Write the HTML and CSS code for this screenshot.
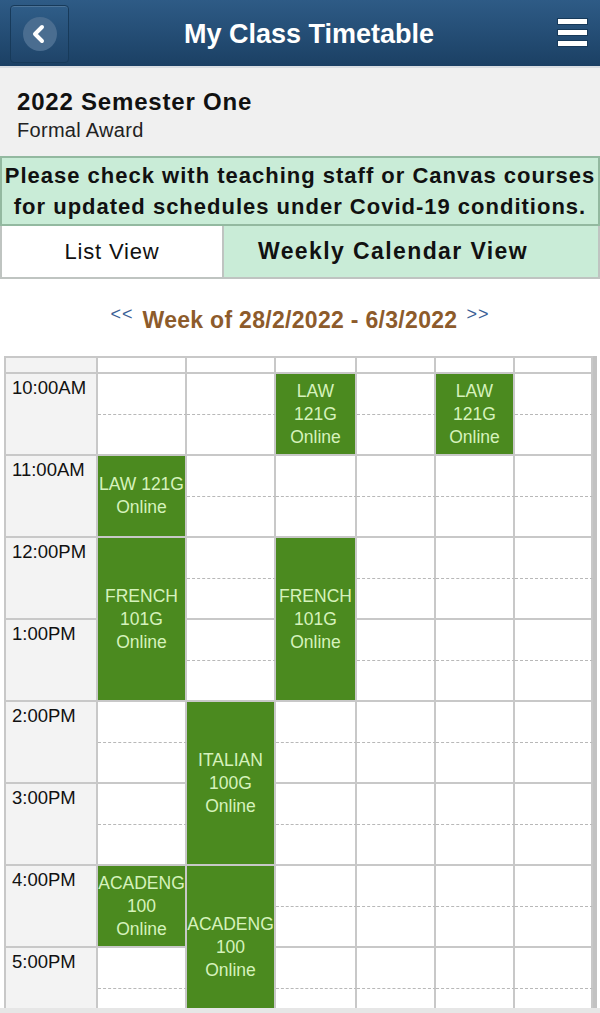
FILE: index.html
```html
<!DOCTYPE html>
<html lang="en">
<head>
<meta charset="UTF-8" />
<meta name="viewport" content="width=device-width, initial-scale=1" />
<title>My Class Timetable</title>
<link rel="stylesheet" href="styles.css">
</head>
<body>

<div class="topbar">
  <div class="back-btn">
    <span class="back-circle">
      <svg width="20" height="20" viewBox="0 0 20 20"><path d="M13 3 L6 10 L13 17" fill="none" stroke="#fff" stroke-width="4" stroke-linecap="round" stroke-linejoin="round"/></svg>
    </span>
  </div>
  <h1 class="title">My Class Timetable</h1>
  <div class="menu-btn">
    <span></span><span></span><span></span>
  </div>
</div>

<div class="term">
  <div class="term-name">2022 Semester One</div>
  <div class="term-sub">Formal Award</div>
</div>

<div class="notice">Please check with teaching staff or Canvas courses<br>for updated schedules under Covid-19 conditions.</div>

<div class="tabs">
  <div class="tab">List View</div>
  <div class="tab active">Weekly Calendar View</div>
</div>

<div class="week-nav">
  <span class="arrow">&lt;&lt;</span>
  <span class="week-label">Week of 28/2/2022 - 6/3/2022</span>
  <span class="arrow">&gt;&gt;</span>
</div>

<div class="calendar-wrap">
  <div id="calendar" class="calendar"></div>
</div>

<script>
  const hours = ['10:00AM', '11:00AM', '12:00PM', '1:00PM', '2:00PM', '3:00PM', '4:00PM', '5:00PM'];
  const days = 6;

  // day = column (1..6), start = half hour slot from 10am, len = slots
  const events = [
    { day: 3, start: 0, len: 2, text: 'LAW<br>121G<br>Online' },
    { day: 5, start: 0, len: 2, text: 'LAW<br>121G<br>Online' },
    { day: 1, start: 2, len: 2, text: 'LAW 121G<br>Online' },
    { day: 1, start: 4, len: 4, text: 'FRENCH<br>101G<br>Online' },
    { day: 3, start: 4, len: 4, text: 'FRENCH<br>101G<br>Online' },
    { day: 2, start: 8, len: 4, text: 'ITALIAN<br>100G<br>Online' },
    { day: 1, start: 12, len: 2, text: 'ACADENG<br>100<br>Online' },
    { day: 2, start: 12, len: 4, text: 'ACADENG<br>100<br>Online' }
  ];

  const cal = document.getElementById('calendar');

  function addCell(cls, row, col, span, html) {
    const el = document.createElement('div');
    el.className = cls;
    el.style.gridRow = row + (span ? ' / span ' + span : '');
    el.style.gridColumn = col;
    if (html) el.innerHTML = html;
    cal.appendChild(el);
  }

  // header row
  addCell('cell head time-col', 1, 1);
  for (let d = 1; d <= days; d++) addCell('cell head', 1, d + 1);

  hours.forEach((h, i) => {
    const row = 2 + i * 2;
    addCell('cell time-col time', row, 1, 2, h);
    for (let d = 1; d <= days; d++) {
      addCell('cell half', row, d + 1);
      addCell('cell', row + 1, d + 1);
    }
  });

  events.forEach(ev => {
    addCell('event', 2 + ev.start, ev.day + 1, ev.len, '<span>' + ev.text + '</span>');
  });
</script>

</body>
</html>
```

FILE: styles.css
```css
/* timetable page */
body {
  margin: 0;
  background: #f0f0f0;
  font-family: 'Liberation Sans', Arial, sans-serif;
  color: #111;
}

.topbar {
  height: 68px;
  background: linear-gradient(#2e5b86, #1b4064);
  border-bottom: 2px solid #d9dde2;
  display: flex;
  align-items: center;
  padding: 2px 12px 0 10px;
  box-sizing: border-box;
}
.back-btn {
  width: 59px;
  height: 58px;
  border: 1px solid #173a5a;
  border-radius: 4px;
  box-shadow: inset 0 1px 0 rgba(255,255,255,0.15);
  background: linear-gradient(#2f5d88, #1f4469);
  display: flex;
  align-items: center;
  justify-content: center;
  box-sizing: border-box;
}
.back-circle {
  width: 34px;
  height: 34px;
  border-radius: 50%;
  background: #4a6d90;
  display: flex;
  align-items: center;
  justify-content: center;
}
.back-circle svg {
  margin-left: -2px;
}
.title {
  flex: 1;
  margin: 0;
  text-align: center;
  color: #fff;
  font-size: 27px;
  font-weight: bold;
  padding-right: 8px;
}
.menu-btn {
  display: flex;
  flex-direction: column;
  gap: 4px;
  margin-top: -4px;
}
.menu-btn span {
  display: block;
  width: 31px;
  height: 7px;
  background: #fff;
  border: 1px solid #173a5a;
  box-sizing: border-box;
}

.term {
  padding: 19px 17px 12px;
}
.term-name {
  font-size: 24px;
  letter-spacing: 0.8px;
  font-weight: bold;
  line-height: 30px;
}
.term-sub {
  font-size: 20px;
  letter-spacing: 0.3px;
  line-height: 27px;
  color: #222;
}

.notice {
  background: #c9ecd7;
  border: 2px solid #93b9a0;
  text-align: center;
  font-size: 22px;
  letter-spacing: 1px;
  font-weight: bold;
  line-height: 31px;
  padding: 2px 0 2px;
  white-space: nowrap;
}

.tabs {
  display: flex;
  border: 2px solid #bfc4c1;
  border-top: none;
  height: 53px;
  box-sizing: border-box;
}
.tab {
  flex: 0 0 220px;
  background: #fff;
  display: flex;
  align-items: center;
  justify-content: center;
  font-size: 22px;
  letter-spacing: 0.8px;
  border-right: 2px solid #bfc4c1;
}
.tab.active {
  flex: 1;
  background: #c9ecd7;
  font-weight: bold;
  font-size: 23px;
  letter-spacing: 1.4px;
  padding-right: 36px;
  border-right: none;
}

.week-nav {
  background: #fff;
  height: 77px;
  display: flex;
  align-items: center;
  justify-content: center;
  gap: 9px;
  padding-top: 6px;
  box-sizing: border-box;
}
.arrow {
  color: #3b5f96;
  font-size: 18px;
  letter-spacing: 1px;
  margin-top: -12px;
}
.week-label {
  color: #8d5b2b;
  font-size: 23px;
  letter-spacing: 0.3px;
  font-weight: bold;
}

.calendar-wrap {
  background: #fff;
  height: 652px;
  overflow: hidden;
  padding-left: 4px;
  border-bottom: 5px solid #e6e6e6;
}
.calendar {
  display: grid;
  grid-template-columns: 94px 89px 89px 81px 79px 79px 78px;
  grid-template-rows: 18px;
  grid-auto-rows: 41px;
  border-right: 4px solid #c2c2c2;
  width: max-content;
}
.cell {
  border-right: 2px solid #c8c8c8;
  border-bottom: 2px solid #c8c8c8;
  background: #fff;
}
.cell.half {
  border-bottom: 1px dashed #b8b8b8;
}
.cell.head {
  border-top: 2px solid #c8c8c8;
  border-bottom: 2px solid #c8c8c8;
}
.time-col {
  background: #f3f3f3;
  border-left: 2px solid #c8c8c8;
}
.time {
  font-size: 18.5px;
  padding: 3px 0 0 6px;
}
.event {
  background: #4b8a1f;
  color: #d6f2bc;
  font-size: 17.5px;
  line-height: 23px;
  text-align: center;
  display: flex;
  align-items: center;
  justify-content: center;
  border-right: 2px solid #c8c8c8;
  border-bottom: 2px solid #c8c8c8;
  white-space: nowrap;
  overflow: hidden;
  z-index: 1;
}
```
